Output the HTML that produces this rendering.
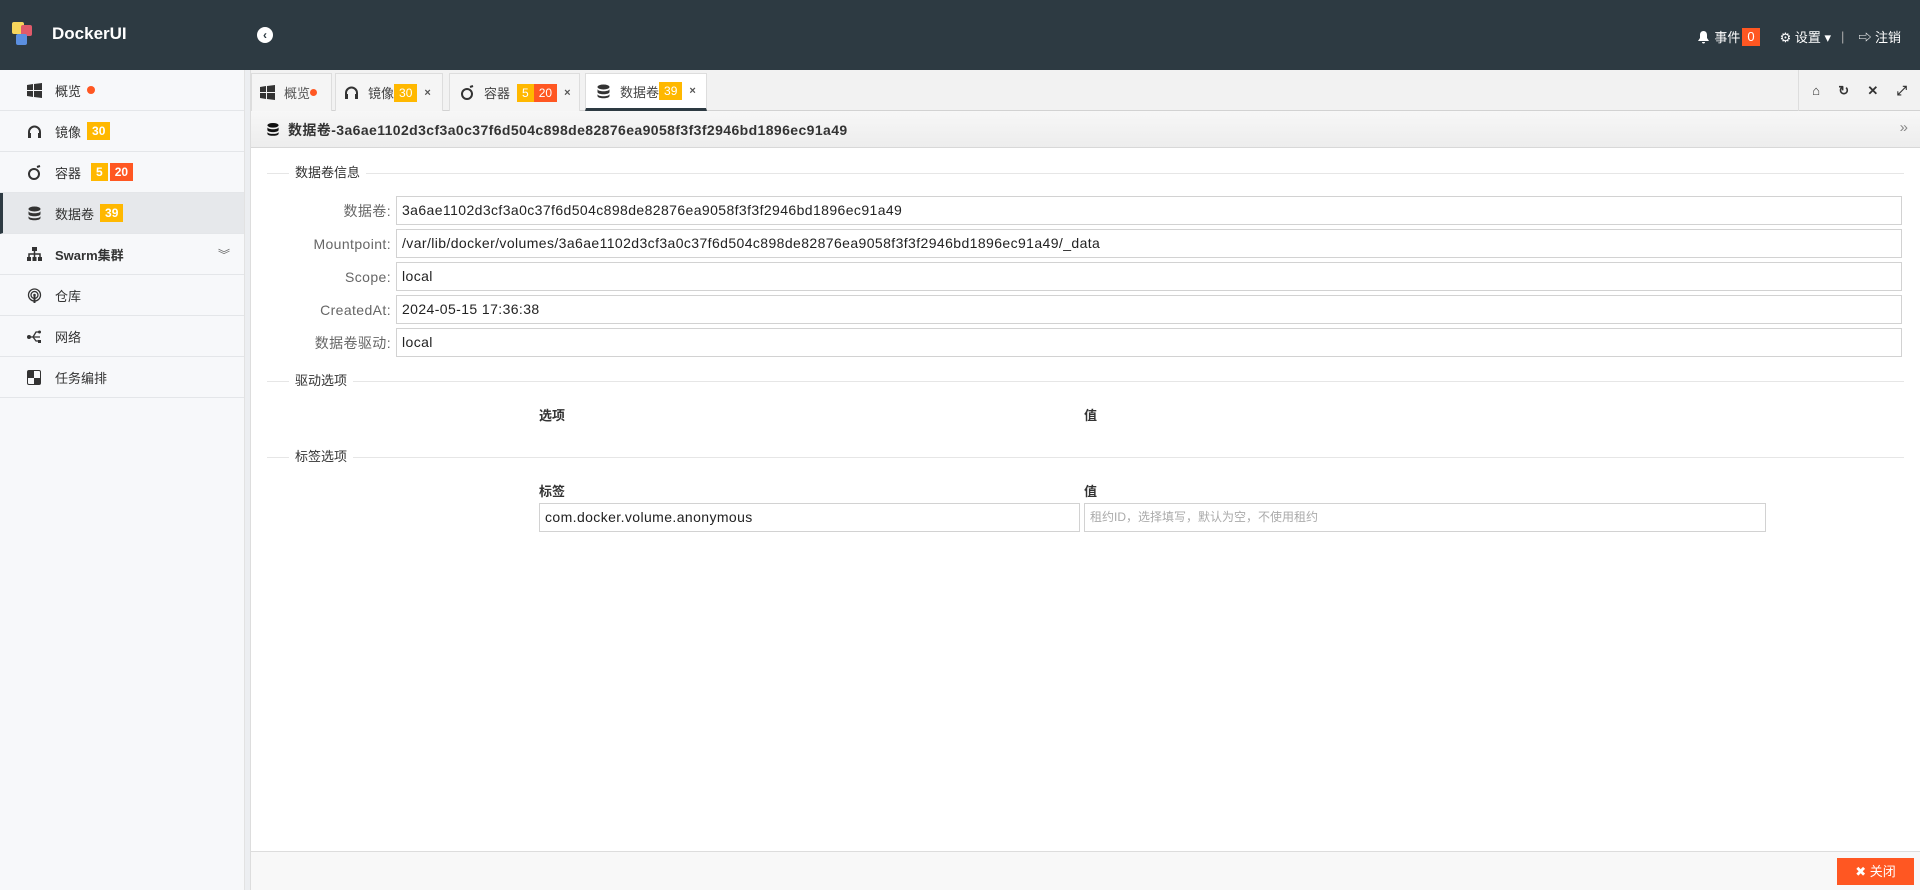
<!DOCTYPE html>
<html><head><meta charset="utf-8">
<style>
*{box-sizing:border-box;margin:0;padding:0}
body{width:1920px;height:890px;overflow:hidden;font-family:"Liberation Sans","Noto Sans CJK SC",sans-serif;font-size:13px;color:#333;background:#fff;position:relative}
.hdr{position:absolute;left:0;top:0;width:1920px;height:70px;background:#2d3a42;color:#fff}
.abs{position:absolute}
.side{position:absolute;left:0;top:70px;width:245px;height:820px;background:#f7f8fa;border-right:1px solid #e2e2e2}
.gap{position:absolute;left:245px;top:70px;width:6px;height:820px;background:#eceef1;border-right:1px solid #ddd}
.item{height:41px;border-bottom:1px solid #e4e6e9;display:flex;align-items:center;padding-left:55px;font-size:13px;color:#333;position:relative}
.item.act{background:#e6e8eb;border-left:3px solid #2d3a42;padding-left:52px}
.ico{position:absolute;left:27px;top:13px;width:15px;height:15px}
.bd{display:inline-block;color:#fff;font-size:12px;font-weight:bold;padding:0 5px;height:18px;line-height:18px;margin-left:6px}
.y{background:#ffb800}.r{background:#ff5722}
.tabbar{position:absolute;left:251px;top:70px;width:1669px;height:41px;background:#f2f2f2;border-bottom:1px solid #d2d2d2}
.tab{position:absolute;top:3px;height:38px;background:#f5f5f5;border:1px solid #ddd;border-bottom:none;display:flex;align-items:center;font-size:13px;color:#444}
.tab .x{font-size:11px;color:#555;margin-left:7px;font-weight:bold}
.tab.act{background:#fff;border-bottom:3px solid #2d3a42}
.tb2{position:absolute;left:251px;top:111px;width:1669px;height:37px;background:linear-gradient(#f7f7f7,#ededed);border-bottom:1px solid #d8d8d8}
.leg{position:absolute;left:267px;width:1637px;height:1px;background:#e6e6e6}
.leg span{position:absolute;left:22px;top:-9px;background:#fff;padding:0 6px;font-size:13px;color:#333;line-height:18px}
.lbl{position:absolute;width:140px;left:251px;text-align:right;color:#666;font-size:14px;letter-spacing:0.4px;line-height:30px}
.inp{position:absolute;height:29px;border:1px solid #d2d2d2;background:#fff;line-height:27px;padding-left:5px;font-size:14px;letter-spacing:0.4px;color:#222}
.foot{position:absolute;left:251px;top:851px;width:1669px;height:39px;background:#f8f8f8;border-top:1px solid #ddd}
</style></head><body>
<div class="hdr">
  <div class="abs" style="left:12px;top:22px;width:12px;height:12px;background:#f6d55c;border-radius:2px"></div>
  <div class="abs" style="left:21px;top:25px;width:11px;height:11px;background:#e05a6a;border-radius:2px"></div>
  <div class="abs" style="left:16px;top:34px;width:11px;height:11px;background:#5b8fe0;border-radius:2px"></div>
  <div class="abs" style="left:52px;top:24px;font-size:17px;font-weight:bold;color:#fff">DockerUI</div>
  <div class="abs" style="left:257px;top:27px;width:16px;height:16px;border-radius:50%;background:#fff;color:#2d3a42;font-size:12px;font-weight:bold;text-align:center;line-height:16px">‹</div>
  <div class="abs" style="right:19px;top:27px;font-size:13px;color:#fff;display:flex;align-items:center">
    <svg width="13" height="14" viewBox="0 0 13 14"><path d="M6.5 1C4 1 3 3 3 5v3L1 11h11L10 8V5c0-2-1-4-3.5-4zM5 12h3a1.5 1.5 0 0 1-3 0z" fill="#fff"/></svg>
    <span style="margin-left:4px">事件</span><span style="background:#ff5722;padding:0 5px;margin-left:2px;line-height:18px">0</span>
    <span style="margin-left:20px">⚙ 设置 ▾</span><span style="margin-left:10px;color:#aaa">|</span><span style="margin-left:14px">⇨ 注销</span>
  </div>
</div>
<div class="side">
  <div class="item"><svg class="ico" viewBox="0 0 15 15"><path d="M0 2l6-1v6H0zM7 1l8-1v7H7zM0 8h6v6l-6-1zM7 8h8v7l-8-1z" fill="#333"/></svg>概览<span style="width:8px;height:8px;border-radius:50%;background:#ff5722;margin-left:6px"></span></div>
  <div class="item"><svg class="ico" viewBox="0 0 15 15"><path d="M2 10V8a5.5 5.5 0 0 1 11 0v2" stroke="#333" stroke-width="2" fill="none"/><rect x="1" y="9" width="3" height="5" fill="#333"/><rect x="11" y="9" width="3" height="5" fill="#333"/></svg>镜像<span class="bd y">30</span></div>
  <div class="item"><svg class="ico" viewBox="0 0 15 15"><ellipse cx="7" cy="9" rx="5" ry="5" stroke="#333" stroke-width="2" fill="none"/><path d="M10 2l3-1" stroke="#333" stroke-width="2"/></svg>容器<span class="bd y" style="margin-left:10px">5</span><span class="bd r" style="margin-left:2px">20</span></div>
  <div class="item act"><svg class="ico" style="left:24px" viewBox="0 0 15 15"><ellipse cx="7.5" cy="3" rx="6" ry="2.5" fill="#333"/><path d="M1.5 5c0 3 12 3 12 0v3c0 3-12 3-12 0zM1.5 10c0 3 12 3 12 0v2c0 3-12 3-12 0z" fill="#333"/></svg>数据卷<span class="bd y">39</span></div>
  <div class="item"><svg class="ico" viewBox="0 0 15 15"><rect x="5" y="0" width="5" height="4" fill="#333"/><path d="M7.5 4v3M2 10V7h11v3M7.5 7v3" stroke="#333" stroke-width="1.5" fill="none"/><rect x="0" y="10" width="4" height="4" fill="#333"/><rect x="5.5" y="10" width="4" height="4" fill="#333"/><rect x="11" y="10" width="4" height="4" fill="#333"/></svg><b style="font-weight:bold">Swarm集群</b><span style="position:absolute;right:14px;color:#666;font-size:12px">︾</span></div>
  <div class="item"><svg class="ico" viewBox="0 0 15 15"><circle cx="7.5" cy="7" r="6" stroke="#333" stroke-width="1.3" fill="none"/><circle cx="7.5" cy="7" r="3.5" stroke="#333" stroke-width="1.3" fill="none"/><circle cx="7.5" cy="7" r="1.3" fill="#333"/><path d="M7.5 8v7" stroke="#333" stroke-width="2"/></svg>仓库</div>
  <div class="item"><svg class="ico" viewBox="0 0 15 15"><circle cx="2" cy="8" r="2" fill="#333"/><path d="M3 8h10M6 8l3-5h3M6 8l3 4h2" stroke="#333" stroke-width="1.3" fill="none"/><rect x="11" y="11" width="3" height="3" fill="#333"/><circle cx="12.5" cy="3" r="1.5" fill="#333"/></svg>网络</div>
  <div class="item"><svg class="ico" viewBox="0 0 15 15"><rect x="0.5" y="0.5" width="13" height="14" rx="1.5" stroke="#333" fill="none"/><rect x="1" y="1" width="6" height="7" fill="#333"/><rect x="7" y="8" width="6" height="6" fill="#333"/></svg>任务编排</div>
</div>
<div class="gap"></div>
<div class="tabbar">
  <div class="tab" style="left:0;width:81px;padding-left:8px"><svg width="15" height="15" viewBox="0 0 15 15"><path d="M0 2l6-1v6H0zM7 1l8-1v7H7zM0 8h6v6l-6-1zM7 8h8v7l-8-1z" fill="#333"/></svg><span style="margin-left:9px;color:#555">概览</span><span style="width:7px;height:7px;border-radius:50%;background:#ff5722"></span></div>
  <div class="tab" style="left:84px;width:108px;padding-left:8px"><svg width="15" height="15" viewBox="0 0 15 15"><path d="M2 10V8a5.5 5.5 0 0 1 11 0v2" stroke="#333" stroke-width="2" fill="none"/><rect x="1" y="9" width="3" height="5" fill="#333"/><rect x="11" y="9" width="3" height="5" fill="#333"/></svg><span style="margin-left:9px">镜像</span><span class="bd y" style="margin-left:0;font-weight:normal">30</span><span class="x">×</span></div>
  <div class="tab" style="left:198px;width:131px;padding-left:10px"><svg width="15" height="15" viewBox="0 0 15 15"><ellipse cx="7" cy="9" rx="5" ry="5" stroke="#333" stroke-width="2" fill="none"/><path d="M10 2l3-1" stroke="#333" stroke-width="2"/></svg><span style="margin-left:9px">容器</span><span class="bd y" style="margin-left:7px;font-weight:normal">5</span><span class="bd r" style="margin-left:0;font-weight:normal">20</span><span class="x">×</span></div>
  <div class="tab act" style="left:334px;width:122px;padding-left:10px"><svg width="15" height="15" viewBox="0 0 15 15"><ellipse cx="7.5" cy="3" rx="6" ry="2.5" fill="#333"/><path d="M1.5 5c0 3 12 3 12 0v3c0 3-12 3-12 0zM1.5 10c0 3 12 3 12 0v2c0 3-12 3-12 0z" fill="#333"/></svg><span style="margin-left:9px">数据卷</span><span class="bd y" style="margin-left:0;font-weight:normal">39</span><span class="x">×</span></div>
  <div class="abs" style="left:1547px;top:0;width:122px;height:41px;border-left:1px solid #ddd;display:flex;align-items:center;justify-content:space-around;padding:0 4px;font-size:13px;color:#333;font-weight:bold"><span>⌂</span><span>↻</span><span>✕</span><span>⤢</span></div>
</div>
<div class="tb2">
  <svg class="abs" style="left:15px;top:11px" width="14" height="15" viewBox="0 0 15 15"><ellipse cx="7.5" cy="3" rx="6" ry="2.5" fill="#111"/><path d="M1.5 5c0 3 12 3 12 0v3c0 3-12 3-12 0zM1.5 10c0 3 12 3 12 0v2c0 3-12 3-12 0z" fill="#111"/></svg>
  <div class="abs" style="left:37px;top:9px;font-size:14px;letter-spacing:0.4px;font-weight:bold;color:#333">数据卷-3a6ae1102d3cf3a0c37f6d504c898de82876ea9058f3f3f2946bd1896ec91a49</div>
  <div class="abs" style="right:12px;top:8px;color:#888;font-size:15px">»</div>
</div>
<div class="leg" style="top:173px"><span>数据卷信息</span></div>
<div class="lbl" style="top:196px">数据卷:</div><div class="inp" style="left:396px;top:196px;width:1506px">3a6ae1102d3cf3a0c37f6d504c898de82876ea9058f3f3f2946bd1896ec91a49</div>
<div class="lbl" style="top:229px">Mountpoint:</div><div class="inp" style="left:396px;top:229px;width:1506px">/var/lib/docker/volumes/3a6ae1102d3cf3a0c37f6d504c898de82876ea9058f3f3f2946bd1896ec91a49/_data</div>
<div class="lbl" style="top:262px">Scope:</div><div class="inp" style="left:396px;top:262px;width:1506px">local</div>
<div class="lbl" style="top:295px">CreatedAt:</div><div class="inp" style="left:396px;top:295px;width:1506px">2024-05-15 17:36:38</div>
<div class="lbl" style="top:328px">数据卷驱动:</div><div class="inp" style="left:396px;top:328px;width:1506px">local</div>
<div class="leg" style="top:381px"><span>驱动选项</span></div>
<div class="abs" style="left:539px;top:405px;font-weight:bold;font-size:13px">选项</div>
<div class="abs" style="left:1084px;top:405px;font-weight:bold;font-size:13px">值</div>
<div class="leg" style="top:457px"><span>标签选项</span></div>
<div class="abs" style="left:539px;top:481px;font-weight:bold;font-size:13px">标签</div>
<div class="abs" style="left:1084px;top:481px;font-weight:bold;font-size:13px">值</div>
<div class="inp" style="left:539px;top:503px;width:541px">com.docker.volume.anonymous</div>
<div class="inp" style="left:1084px;top:503px;width:682px;color:#aaa;font-size:12px;letter-spacing:0">租约ID，选择填写，默认为空，不使用租约</div>
<div class="foot"><div class="abs" style="left:1586px;top:6px;width:77px;height:27px;background:#ff5722;color:#fff;text-align:center;line-height:27px;font-size:13px">✖ 关闭</div></div>
</body></html>
